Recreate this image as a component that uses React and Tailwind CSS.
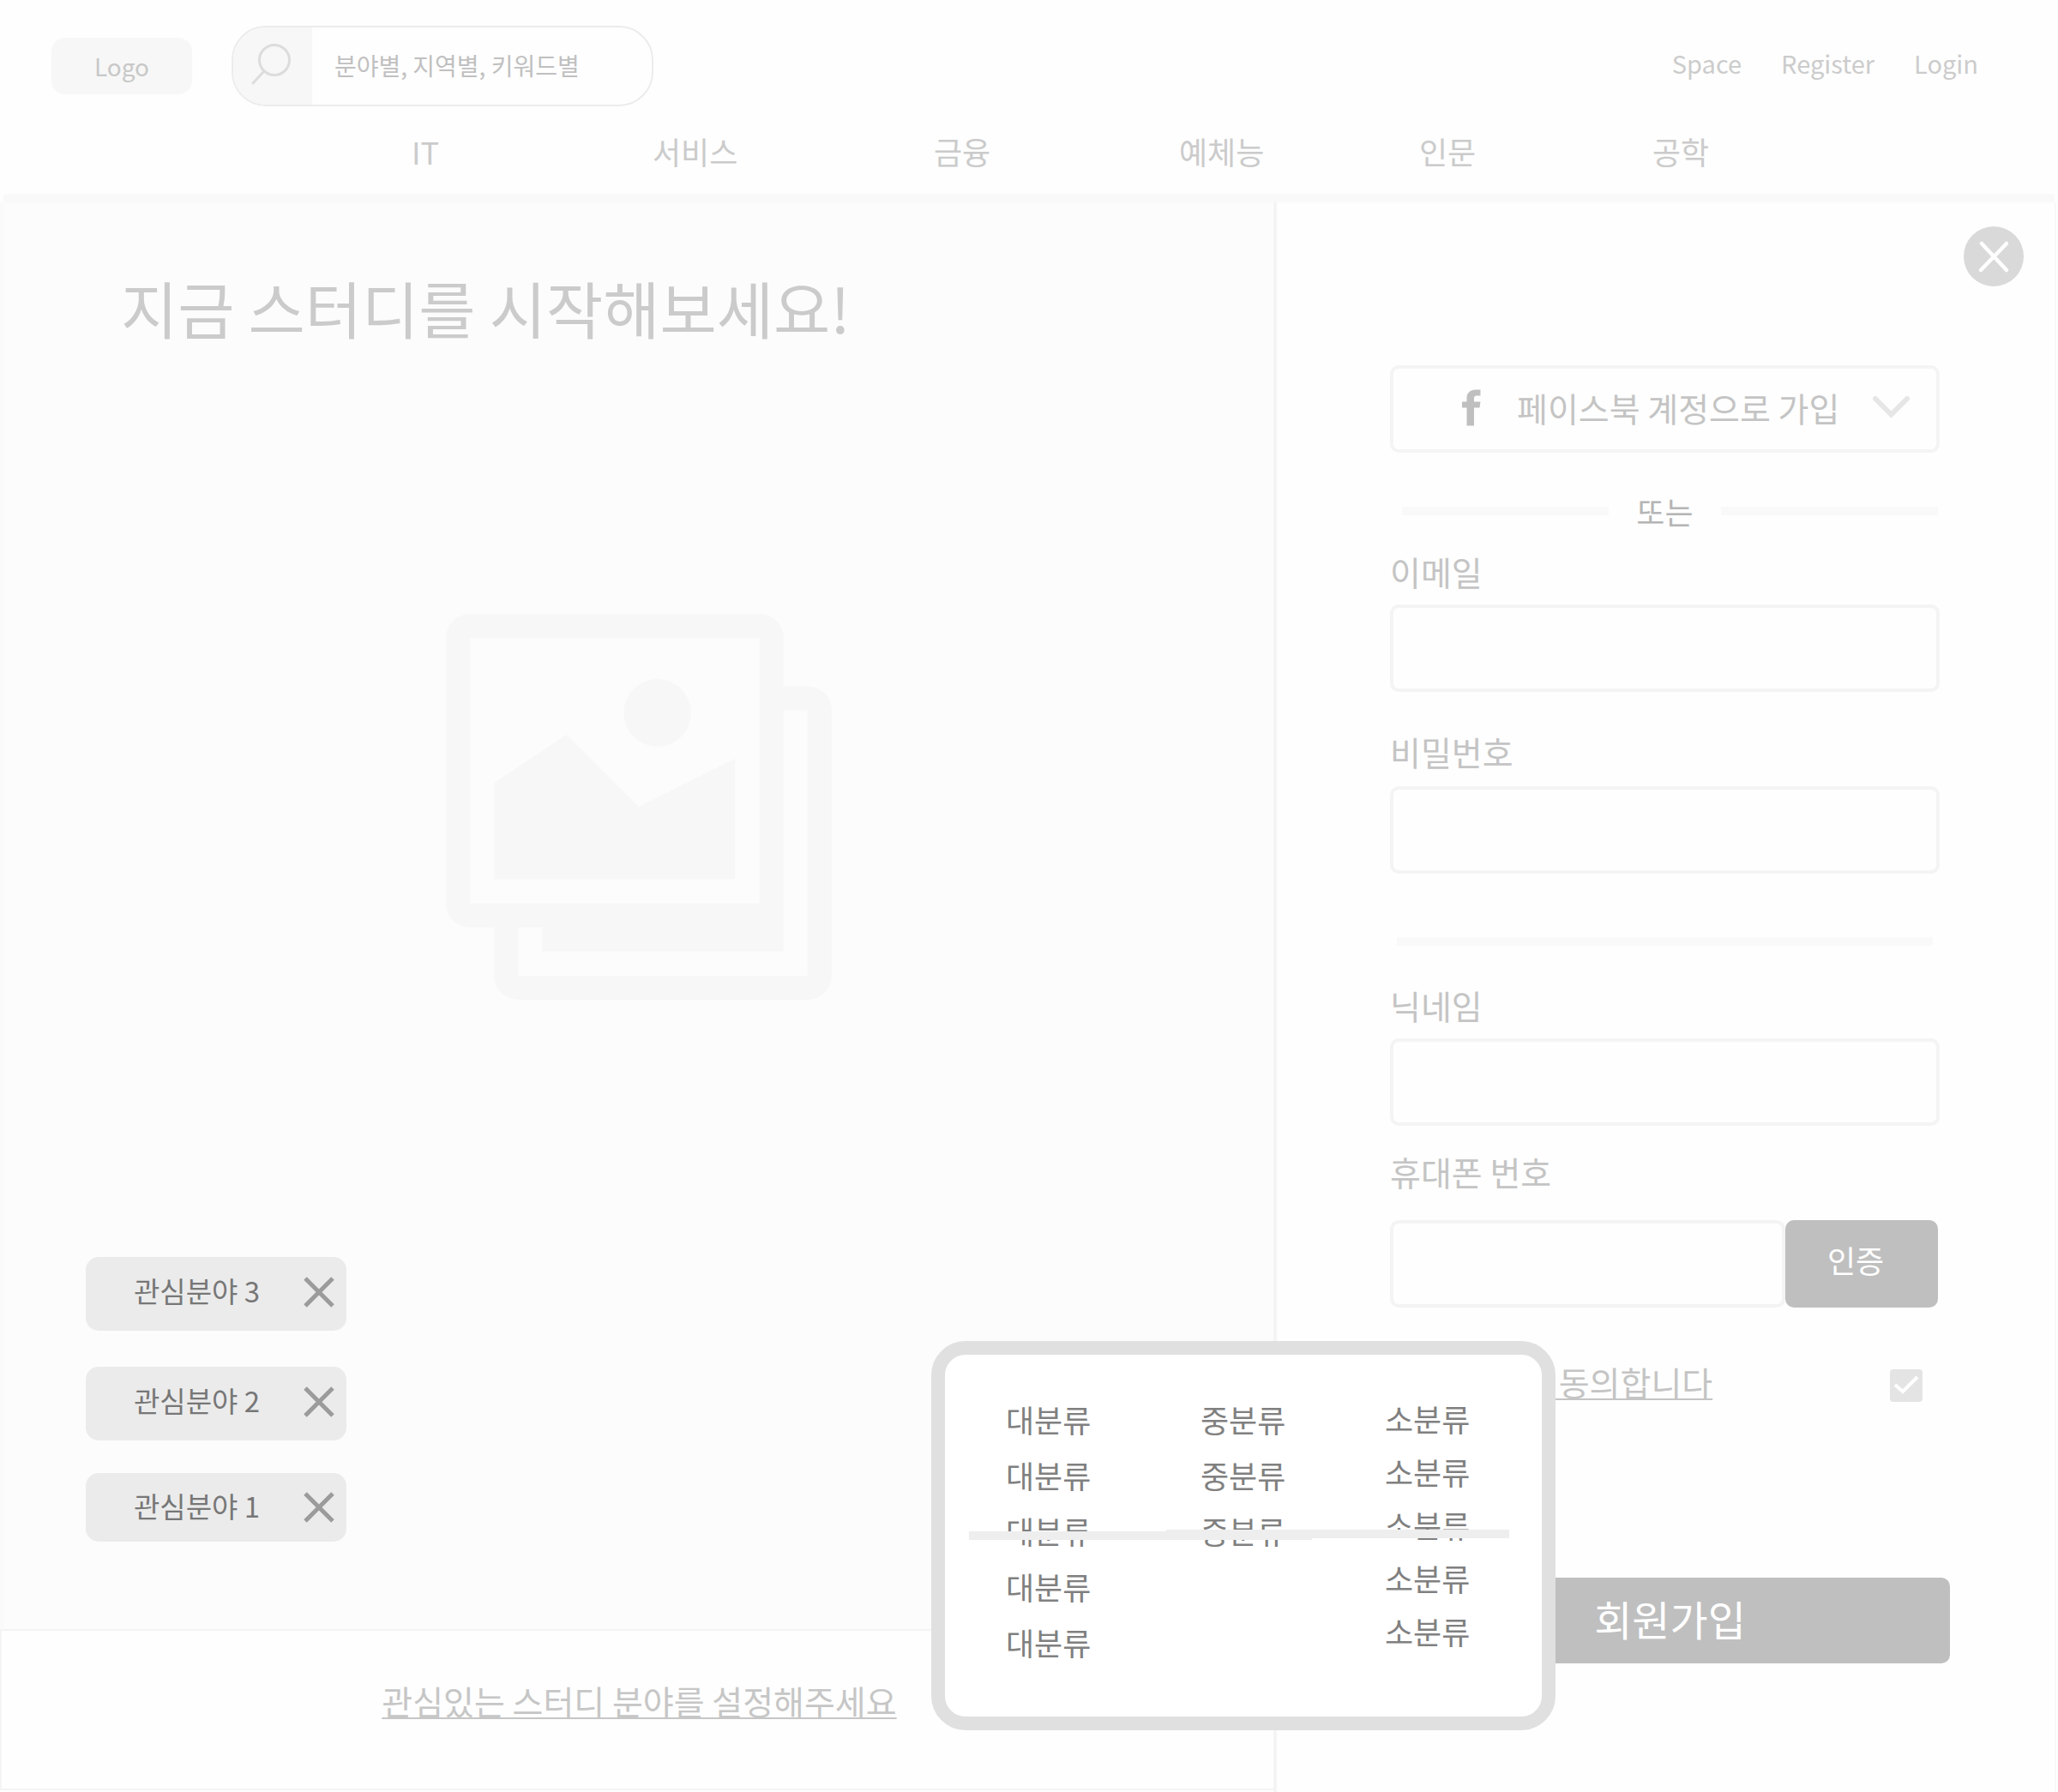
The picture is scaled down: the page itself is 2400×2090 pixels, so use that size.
const categories = ["IT", "서비스", "금융", "예체능", "인문", "공학"];

const interests = [
  { label: "관심분야 3", box: "h-[86px] pb-2" },
  { label: "관심분야 2", box: "mt-[42px] h-[86px] pb-2" },
  { label: "관심분야 1", box: "mt-[38px] h-[80px] pb-1" },
];

const classification = [
  { name: "대분류", count: 5, leading: "leading-[65px]" },
  { name: "중분류", count: 3, leading: "leading-[65px]" },
  { name: "소분류", count: 5, leading: "leading-[62px]" },
];

function SearchIcon() {
  return (
    <svg width="92" height="90" viewBox="0 0 92 90" fill="none" stroke="#dcdcdc" strokeWidth="3" aria-hidden="true">
      <circle cx="48" cy="38" r="17.500" />
      <path d="M36 51 23 65" strokeLinecap="round" />
    </svg>
  );
}

function GalleryIcon() {
  return (
    <svg width="450" height="450" viewBox="0 0 16 16" fill="#f7f7f7" aria-hidden="true">
      <path
        fillRule="evenodd"
        d="M1 0H13A1 1 0 0 1 14 1V3H15A1 1 0 0 1 16 4V15A1 1 0 0 1 15 16H3A1 1 0 0 1 2 15V13H1A1 1 0 0 1 0 12V1A1 1 0 0 1 1 0ZM1 1V12H13V1ZM14 4V14H4V13H3V15H15V4Z"
      />
      <path d="M2 7 5 5 8 8 12 6V11H2Z" />
      <circle cx="8.770" cy="4.100" r="1.400" />
    </svg>
  );
}

function FacebookIcon() {
  return (
    <svg width="22" height="43" viewBox="0 0 22 43" fill="#bfbfbf" aria-hidden="true">
      <path d="M21.500 .5H16C9.500 .5 5.500 4.500 5.500 10V14.500H0V21.500H5.500V42.500H14V21.500H20.500L21.500 14.500H14V10.500C14 8.500 15 7.500 17 7.500H21.500Z" />
    </svg>
  );
}

function Field({ id, label, type, labelClass, inputClass }) {
  return (
    <>
      <label htmlFor={id} className={`block text-[39px] leading-10 text-[#c4c4c4] ${labelClass}`}>
        {label}
      </label>
      <input
        id={id}
        type={type}
        className={`block h-[102px] w-full rounded-[10px] border-4 border-[#f4f4f4] bg-[#fefefe] px-6 text-[36px] outline-none ${inputClass}`}
      />
    </>
  );
}

function Header() {
  return (
    <header className="pt-[30px]">
      <div className="flex items-center pl-[60px] pr-[93px]">
        <a href="#home" className="flex h-[66px] w-[164px] items-center justify-center rounded-2xl bg-[#f7f7f7] text-[28px] leading-7 text-[#c8c8c8]">
          Logo
        </a>
        <form className="ml-[46px] flex h-[94px] w-[492px] overflow-hidden rounded-[40px] border-2 border-[#ececec]">
          <button type="button" aria-label="검색" className="bg-[#f7f7f7]">
            <SearchIcon />
          </button>
          <input
            type="search"
            aria-label="검색어"
            placeholder="분야별, 지역별, 키워드별"
            className="min-w-0 flex-1 bg-transparent pb-[2px] pl-[26px] text-[28px] outline-none placeholder:text-[#c0c0c0] placeholder:opacity-100"
          />
        </form>
        <div className="ml-auto flex gap-[46px] pb-2 text-[29px] leading-7 text-[#cccccc]">
          <a href="#space">Space</a>
          <a href="#register">Register</a>
          <a href="#login">Login</a>
        </div>
      </div>
      <nav className="mt-[34px] grid grid-cols-[480fr_281fr_328fr_286fr_280fr_272fr_473fr] pb-8 text-[36px] leading-9 text-[#cbcbcb]">
        <span />
        {categories.map((name) => (
          <a key={name} href={`#${name}`}>
            {name}
          </a>
        ))}
      </nav>
      <div className="mx-1 h-[10px] rounded-t bg-[#f9f9f9]" />
    </header>
  );
}

function Intro() {
  return (
    <section className="flex flex-col">
      <div className="border-l-4 border-[#fafafa] bg-[#fcfcfc] pb-[102px] pt-[86px]">
        <h1 className="pl-[137px] text-[72px] leading-[72px] text-[#cbcbcb]">지금 스터디를 시작해보세요!</h1>
        <div className="mt-[322px] flex justify-center">
          <GalleryIcon />
        </div>
        <ul className="mt-[300px] pl-24">
          {interests.map(({ label, box }) => (
            <li key={label} className={`flex w-[304px] items-center rounded-[15px] bg-[#ebebeb] pl-14 pr-[14px] ${box}`}>
              <span className="text-[33px] leading-9 text-[#777777]">{label}</span>
              <button type="button" aria-label={`${label} 삭제`} className="ml-auto mt-1">
                <svg width="36" height="36" viewBox="0 0 36 36" fill="none" stroke="#9b9b9b" strokeWidth="5" aria-hidden="true">
                  <path d="M2 2 34 34M34 2 2 34" />
                </svg>
              </button>
            </li>
          ))}
        </ul>
      </div>
      <div className="border-y-2 border-l-2 border-[#f4f4f4] pb-[83px] pl-1 pt-[62px] text-center text-[39px] leading-[39px]">
        <a href="#interests" className="text-[#c6c6c6] underline decoration-2 underline-offset-[3px] [text-decoration-skip-ink:none]">
          관심있는 스터디 분야를 설정해주세요
        </a>
      </div>
    </section>
  );
}

function CategoryPopup() {
  return (
    <div className="absolute left-[-403px] top-[1328px] w-[728px] rounded-[40px] border-[16px] border-[#e0e0e0] bg-white pb-[54px] pl-[71px] pt-[43px]">
      <div className="grid grid-cols-[227px_215px_1fr]">
        {classification.map(({ name, count, leading }) => (
          <ul key={name} className={`text-[36px] text-[#808080] ${leading}`}>
            {Array.from({ length: count }, (_, i) => (
              <li key={i}>
                <button type="button" className="block">
                  {name}
                </button>
              </li>
            ))}
          </ul>
        ))}
      </div>
      <div className="pointer-events-none absolute left-7 top-[206px] h-[10px] w-[400px] bg-[#eeeeee]" />
      <div className="pointer-events-none absolute left-[258px] top-[204px] h-[10px] w-[400px] bg-[#eeeeee]" />
    </div>
  );
}

function SignUp() {
  return (
    <section className="relative mr-[2px] border-l-4 border-r-2 border-l-[#f4f4f4] border-r-[#f8f8f8] pb-[150px] pt-7">
      <div className="flex justify-end pr-9">
        <button type="button" aria-label="닫기" className="rounded-full bg-[#d9d9d9]">
          <svg width="70" height="70" viewBox="0 0 70 70" fill="none" stroke="#ffffff" strokeWidth="4.500" strokeLinecap="round" aria-hidden="true">
            <path d="M21 20 50 51M50 20 20 51" />
          </svg>
        </button>
      </div>
      <form className="pl-[132px] pr-[134px]">
        <button type="button" className="mt-[92px] flex h-[102px] w-full items-center rounded-[10px] border-4 border-[#f4f4f4] pb-1 pl-20 pr-[31px]">
          <FacebookIcon />
          <span className="ml-[42px] whitespace-nowrap text-[39px] leading-10 text-[#c4c4c4]">페이스북 계정으로 가입</span>
          <svg className="ml-auto" width="43" height="26" viewBox="0 0 43 26" fill="none" stroke="#e6e6e6" strokeWidth="6" strokeLinecap="round" aria-hidden="true">
            <path d="M3 3 21.500 21.500 40 3" />
          </svg>
        </button>
        <div className="mt-[50px] flex items-center pl-[14px] pr-[2px]">
          <div className="h-[10px] flex-[241] bg-[#f9f9f9]" />
          <span className="px-8 text-[36px] leading-9 text-[#b5b5b5]">또는</span>
          <div className="h-[10px] flex-[253] bg-[#f9f9f9]" />
        </div>
        <Field id="email" label="이메일" type="email" labelClass="mt-8" inputClass="mt-[19px]" />
        <Field id="password" label="비밀번호" type="password" labelClass="mt-[49px]" inputClass="mt-[21px]" />
        <div className="ml-2 mr-2 mt-[74px] h-[10px] bg-[#f9f9f9]" />
        <Field id="nickname" label="닉네임" type="text" labelClass="mt-[49px]" inputClass="mt-[19px]" />
        <label htmlFor="phone" className="mt-[33px] block text-[39px] leading-10 text-[#c4c4c4]">
          휴대폰 번호
        </label>
        <div className="mt-[37px] flex pr-[2px]">
          <input
            id="phone"
            type="tel"
            className="h-[102px] min-w-0 flex-1 rounded-[10px] border-4 border-[#f4f4f4] bg-[#fefefe] px-6 text-[36px] outline-none"
          />
          <button type="button" className="h-[102px] w-[178px] rounded-[10px] bg-[#bfbfbf] pb-[10px] pr-[14px] text-[36px] leading-9 text-white">
            인증
          </button>
        </div>
        <div className="mt-[66px] flex items-start justify-between pr-5">
          <label htmlFor="agree" className="ml-[188px] text-[39px] leading-10 text-[#c4c4c4] underline decoration-2 underline-offset-[3px] [text-decoration-skip-ink:none]">
            {"\u00a0동의합니다"}
          </label>
          <span className="relative mt-[6px] block size-[38px]">
            <input id="agree" type="checkbox" defaultChecked className="block size-full appearance-none rounded bg-[#e4e4e4]" />
            <svg className="pointer-events-none absolute inset-0" width="38" height="38" viewBox="0 0 38 38" fill="none" stroke="#ffffff" strokeWidth="4" aria-hidden="true">
              <path d="M6 18 15 26 32 9" />
            </svg>
          </span>
        </div>
        <div className="-mr-3 mt-[205px]">
          <button type="submit" className="block h-[100px] w-full rounded-[10px] bg-[#bfbfbf] pb-[6px] text-[48px] leading-[48px] text-white">
            회원가입
          </button>
        </div>
      </form>
      <CategoryPopup />
    </section>
  );
}

export default function App() {
  return (
    <div className="min-h-screen bg-[#fefefe] font-['Noto_Sans_CJK_KR','Noto_Sans',sans-serif]">
      <Header />
      <main className="grid grid-cols-[1485fr_915fr]">
        <Intro />
        <SignUp />
      </main>
    </div>
  );
}
